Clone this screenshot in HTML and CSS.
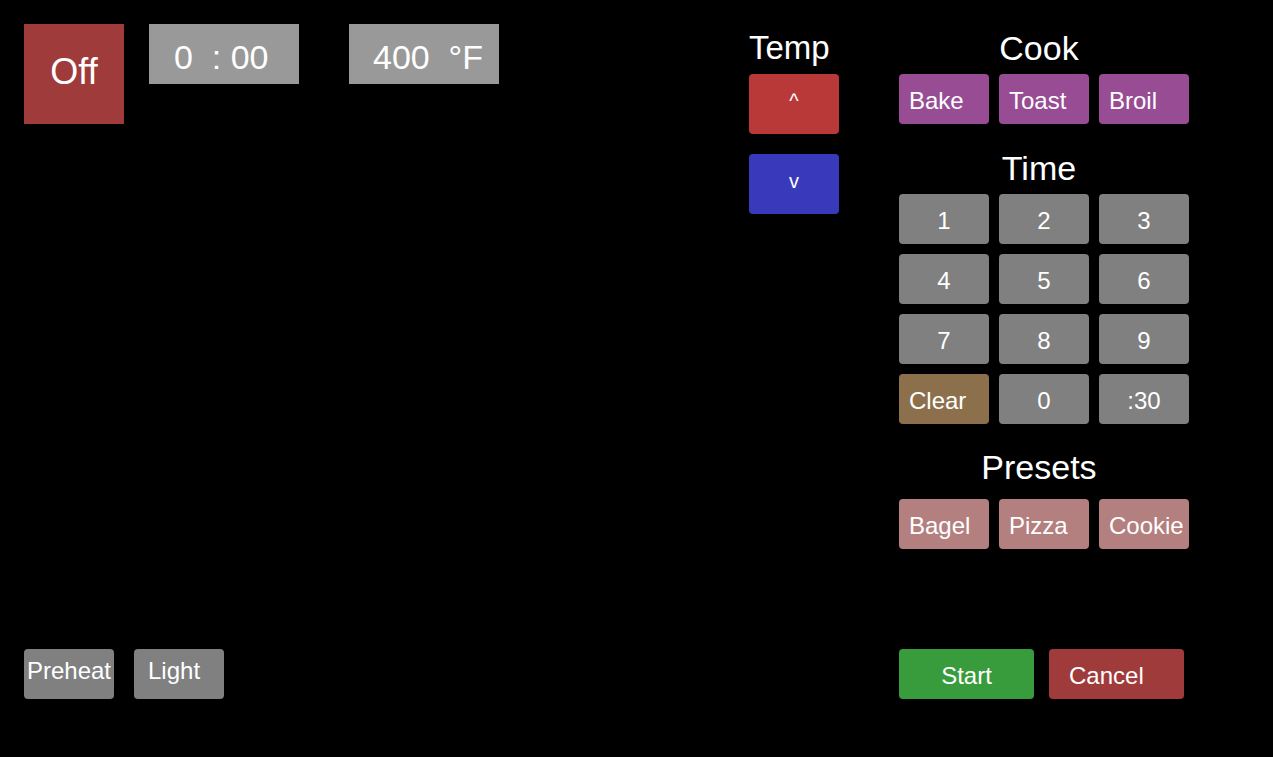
FILE: index.html
```html
<!DOCTYPE html>
<html lang="en">
<head>
    <meta charset="UTF-8">
    <meta name="viewport" content="width=device-width, initial-scale=1.0">
    <title>Toaster Oven</title>
    <link rel="stylesheet" href="styles.css">
</head>
<body>
    <div class="oven">
        <section class="main">
            <div class="status-row">
                <div class="power">Off</div>
                <div class="display timer">0  : 00</div>
                <div class="display temp">400  °F</div>
            </div>
            <div class="extras">
                <button class="btn gray preheat">Preheat</button>
                <button class="btn gray light">Light</button>
            </div>
        </section>

        <section class="temp-col">
            <h2 class="label temp-label">Temp</h2>
            <button class="btn arrow up">^</button>
            <button class="btn arrow down">v</button>
        </section>

        <section class="controls">
            <h2 class="label">Cook</h2>
            <div class="grid">
                <button class="btn cook">Bake</button>
                <button class="btn cook">Toast</button>
                <button class="btn cook">Broil</button>
            </div>

            <h2 class="label time-label">Time</h2>
            <div class="grid">
                <button class="btn gray num">1</button>
                <button class="btn gray num">2</button>
                <button class="btn gray num">3</button>
                <button class="btn gray num">4</button>
                <button class="btn gray num">5</button>
                <button class="btn gray num">6</button>
                <button class="btn gray num">7</button>
                <button class="btn gray num">8</button>
                <button class="btn gray num">9</button>
                <button class="btn clear">Clear</button>
                <button class="btn gray num">0</button>
                <button class="btn gray num">:30</button>
            </div>

            <h2 class="label presets-label">Presets</h2>
            <div class="grid">
                <button class="btn preset">Bagel</button>
                <button class="btn preset">Pizza</button>
                <button class="btn preset">Cookie</button>
            </div>

            <div class="actions">
                <button class="btn start">Start</button>
                <button class="btn cancel">Cancel</button>
            </div>
        </section>
    </div>
</body>
</html>
```

FILE: styles.css
```css
body {
    margin: 0;
    background-color: #000;
    color: #fff;
    font-family: "Liberation Sans", Arial, sans-serif;
}
.oven {
    display: flex;
    height: 757px;
    box-sizing: border-box;
    padding: 24px 0 58px 24px;
}

/* left side: status + extras */
.main {
    width: 725px;
    display: flex;
    flex-direction: column;
}
.status-row {
    display: flex;
    align-items: flex-start;
}
.power {
    width: 100px;
    height: 100px;
    box-sizing: border-box;
    padding-bottom: 4px;
    line-height: 96px;
    text-align: center;
    font-size: 36px;
    background-color: #9f3b3b;
}
.display {
    width: 150px;
    height: 60px;
    box-sizing: border-box;
    padding: 6px 0 0 25px;
    line-height: 54px;
    font-size: 34px;
    white-space: pre;
    background-color: #999;
}
.timer {
    margin-left: 25px;
}
.temp {
    margin-left: 50px;
    padding-left: 24px;
}
.extras {
    margin-top: auto;
    display: flex;
    gap: 20px;
}

/* buttons */
.btn {
    height: 50px;
    box-sizing: border-box;
    padding: 4px 10px 0;
    border: none;
    border-radius: 4px;
    color: #fff;
    font-family: "Liberation Sans", Arial, sans-serif;
    font-size: 24px;
    line-height: 46px;
    text-align: left;
    white-space: nowrap;
    cursor: pointer;
}
.gray {
    background-color: #808080;
}
.preheat {
    width: 90px;
    padding: 0 0 6px;
    line-height: 44px;
    text-align: center;
}
.light {
    width: 90px;
    padding: 0 0 6px 14px;
    line-height: 44px;
}

/* temp column */
.temp-col {
    width: 90px;
    margin-right: 60px;
    display: flex;
    flex-direction: column;
}
.label {
    margin: 0 0 2px;
    font-size: 34px;
    font-weight: normal;
    line-height: 48px;
    text-align: center;
    width: 280px;
}
.temp-label {
    width: auto;
    font-size: 33px;
    text-align: left;
}
.arrow {
    width: 90px;
    height: 60px;
    padding: 0 0 5px;
    line-height: 55px;
    font-size: 20px;
    text-align: center;
}
.up {
    background-color: #b93939;
}
.down {
    margin-top: 20px;
    background-color: #3939bb;
}

/* right controls */
.controls {
    width: 290px;
    display: flex;
    flex-direction: column;
}
.grid {
    display: grid;
    grid-template-columns: repeat(3, 90px);
    gap: 10px;
}
.cook {
    background-color: #974c94;
}
.num {
    text-align: center;
}
.clear {
    background-color: #8c704b;
}
.preset {
    background-color: #b37f7f;
}
.time-label {
    margin-top: 20px;
}
.presets-label {
    margin: 19px 0 8px;
}
.actions {
    margin-top: auto;
    display: flex;
    gap: 15px;
}
.start {
    width: 135px;
    text-align: center;
    background-color: #389c3c;
}
.cancel {
    width: 135px;
    padding-left: 20px;
    background-color: #9f3b3b;
}
```
